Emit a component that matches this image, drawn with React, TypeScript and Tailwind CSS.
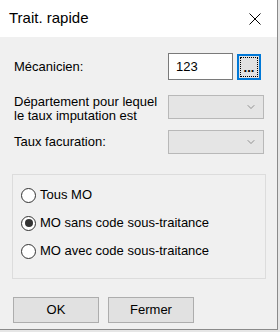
import { ChevronDown } from 'lucide-react';

const font = "font-['Liberation_Sans',Arial,sans-serif]";

function Radio({ label, checked }: { label: string; checked?: boolean }) {
  return (
    <div className="flex h-[28px] items-center pl-[8px]">
      <span className="flex size-[15px] items-center justify-center rounded-full border border-[#333] bg-white">
        {checked && <span className="size-[8px] rounded-full bg-[#333]" />}
      </span>
      <span className="ml-[4px] text-[13px] text-black">{label}</span>
    </div>
  );
}

function Select() {
  return (
    <div className="flex h-[24px] w-[96px] items-center justify-end border border-[#b8b8b8] bg-[#e5e5e5] pr-[6px]">
      <ChevronDown className="size-[12px] text-[#555]" strokeWidth={1.2} />
    </div>
  );
}

export default function App() {
  return (
    <div className={`h-[332px] w-[280px] bg-[#e6e6e6] ${font}`}>
      <div className="flex h-[330px] w-[278px] flex-col border-r border-b border-[#8a8a8a] bg-[#f0f0f0]">
        <div className="flex h-[37px] items-center justify-between bg-white pl-[9px] pr-[16px]">
          <span className="text-[15px] text-black">Trait. rapide</span>
          <svg width="12" height="12" viewBox="0 0 12 12" className="text-black">
            <path d="M0.5 0.5 L11.5 11.5 M11.5 0.5 L0.5 11.5" stroke="currentColor" strokeWidth="1" />
          </svg>
        </div>

        <div className="flex flex-col px-[12px]">
          <div className="mt-[16px] flex h-[27px] items-center">
            <span className="ml-[2px] w-[154px] text-[13px] text-black">Mécanicien:</span>
            <div className="flex h-[27px] w-[65px] items-center border border-[#7a7a7a] bg-white pl-[7px] text-[13px] text-black">
              123
            </div>
            <div className="ml-[4px] flex h-[26px] w-[24px] border-2 border-[#0078d7] bg-[#e1e1e1] p-[1px]">
              <div className="flex flex-1 items-end justify-center border border-dotted border-black pb-[2px] text-[13px] font-bold leading-none text-black">
                ...
              </div>
            </div>
          </div>

          <div className="mt-[15px] flex items-start">
            <span className="ml-[2px] w-[154px] text-[13px] leading-[13.5px] text-black">
              Département pour lequel
              <br />
              le taux imputation est
            </span>
            <Select />
          </div>

          <div className="mt-[8px] flex items-center">
            <span className="ml-[2px] w-[154px] text-[13px] text-black">Taux facuration:</span>
            <Select />
          </div>

          <div className="mt-[20px] w-[254px] border border-[#dcdcdc] pt-[6px] pb-[13px]">
            <Radio label="Tous MO" />
            <Radio label="MO sans code sous-traitance" checked />
            <Radio label="MO avec code sous-traitance" />
          </div>

          <div className="mt-[18px] flex gap-[9px] pl-[1px]">
            <button className="h-[26px] w-[86px] border border-[#adadad] bg-[#e1e1e1] text-[13px] text-black">
              OK
            </button>
            <button className="h-[26px] w-[86px] border border-[#adadad] bg-[#e1e1e1] text-[13px] text-black">
              Fermer
            </button>
          </div>
        </div>
      </div>
    </div>
  );
}
